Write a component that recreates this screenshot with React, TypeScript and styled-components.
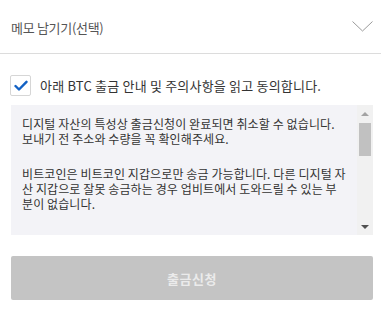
import React from 'react';
import styled, { createGlobalStyle } from 'styled-components';

const GlobalStyle = createGlobalStyle`
  html, body {
    margin: 0;
    padding: 0;
    background: #fff;
  }
  body {
    font-family: 'Noto Sans CJK KR', 'Noto Sans', sans-serif;
    color: #333;
  }
`;

const notices = [
  ['디지털 자산의 특성상 출금신청이 완료되면 취소할 수 없습니다.', '보내기 전 주소와 수량을 꼭 확인해주세요.'],
  ['비트코인은 비트코인 지갑으로만 송금 가능합니다. 다른 디지털 자', '산 지갑으로 잘못 송금하는 경우 업비트에서 도와드릴 수 있는 부', '분이 없습니다.'],
];

const App = () => {
  return (
    <Page>
      <GlobalStyle />
      <MemoHeader>
        <MemoTitle>메모 남기기(선택)</MemoTitle>
        <svg width="21" height="11" viewBox="0 0 21 11" fill="none">
          <path d="M0.5 0.5 L10.5 10 L20.5 0.5" stroke="#9a9a9a" strokeWidth="1" />
        </svg>
      </MemoHeader>

      {/* 동의 체크 */}
      <AgreeRow>
        <CheckBox>
          <svg width="14" height="12" viewBox="0 0 14 12" fill="none">
            <path d="M1.5 6 L5 9.5 L12.5 1.8" stroke="#1261c4" strokeWidth="2.4" strokeLinecap="round" strokeLinejoin="round" />
          </svg>
        </CheckBox>
        <AgreeLabel>아래 BTC 출금 안내 및 주의사항을 읽고 동의합니다.</AgreeLabel>
      </AgreeRow>

      <NoticeBox>
        <NoticeText>
          {notices.map((lines, i) => (
            <NoticeParagraph key={i}>
              {lines.map((line, j) => (
                <NoticeLine key={j}>{line}</NoticeLine>
              ))}
            </NoticeParagraph>
          ))}
        </NoticeText>
        <ScrollTrack>
          <ScrollArrow $dir="up" />
          <ScrollThumb />
          <ScrollSpacer />
          <ScrollArrow $dir="down" />
        </ScrollTrack>
      </NoticeBox>

      <SubmitButton disabled>출금신청</SubmitButton>
    </Page>
  );
};

const Page = styled.div`
  width: 381px;
  display: flex;
  flex-direction: column;
`;

const MemoHeader = styled.div`
  height: 53px;
  display: flex;
  align-items: center;
  justify-content: space-between;
  padding: 0 8px 0 11px;
  border-bottom: 1px solid #dcdcdc;
  box-sizing: content-box;
`;

const MemoTitle = styled.span`
  font-size: 13px;
  letter-spacing: -0.3px;
  color: #555;
  margin-top: 1px;
`;

const AgreeRow = styled.div`
  display: flex;
  align-items: center;
  gap: 9px;
  padding: 21px 8px 0 10px;
  height: 21px;
`;

const CheckBox = styled.span`
  width: 19px;
  height: 19px;
  border: 1px solid #d6d6d6;
  border-radius: 2px;
  background: #fff;
  display: flex;
  align-items: center;
  justify-content: center;
  flex-shrink: 0;
`;

const AgreeLabel = styled.span`
  font-size: 13px;
  letter-spacing: 0.2px;
  color: #333;
`;

const NoticeBox = styled.div`
  margin: 9px 8px 0 11px;
  height: 130px;
  background: #f3f3f7;
  display: flex;
`;

const NoticeText = styled.div`
  flex: 1;
  padding: 11px 0 0 11px;
  font-size: 12px;
  line-height: 15px;
  letter-spacing: 0.1px;
  color: #333;
  overflow: hidden;
`;

const NoticeParagraph = styled.div`
  & + & {
    margin-top: 20px;
  }
`;

const NoticeLine = styled.div`
  white-space: nowrap;
`;

const ScrollTrack = styled.div`
  width: 16px;
  background: #f1f1f1;
  display: flex;
  flex-direction: column;
  align-items: center;
`;

const ScrollArrow = styled.div<{ $dir: 'up' | 'down' }>`
  width: 16px;
  height: 17px;
  display: flex;
  align-items: center;
  justify-content: center;

  &::after {
    content: '';
    width: 0;
    height: 0;
    border-left: 4px solid transparent;
    border-right: 4px solid transparent;
    ${({ $dir }) =>
      $dir === 'up'
        ? 'border-bottom: 4px solid #a3a3a3;'
        : 'border-top: 4px solid #505050;'}
  }
`;

const ScrollThumb = styled.div`
  width: 12px;
  height: 33px;
  margin-top: 1px;
  background: #c1c1c1;
`;

const ScrollSpacer = styled.div`
  flex: 1;
`;

const SubmitButton = styled.button`
  margin: 21px 8px 0 11px;
  height: 44px;
  border: none;
  border-radius: 2px;
  background: #c4c4c4;
  color: #ebebeb;
  font-family: 'Noto Sans CJK KR', 'Noto Sans', sans-serif;
  font-size: 13px;
  font-weight: 700;
  letter-spacing: 0.5px;
  cursor: default;
`;

export default App;
